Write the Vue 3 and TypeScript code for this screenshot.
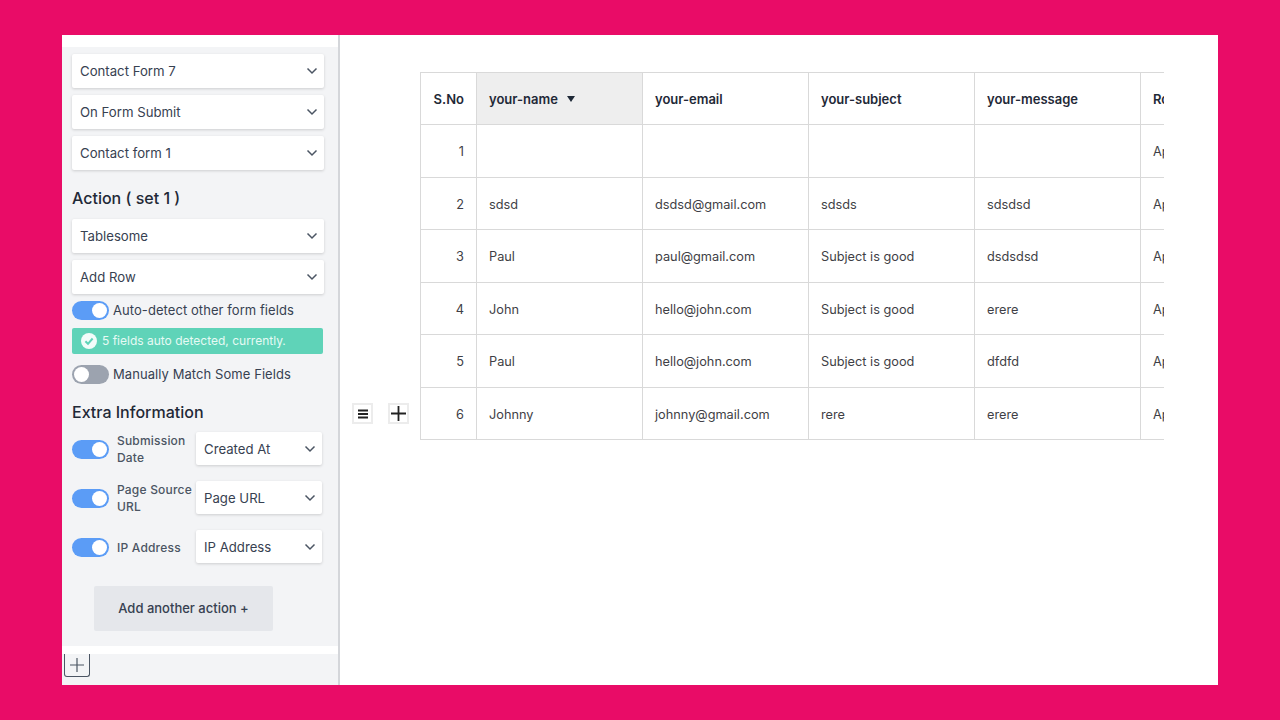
<script setup lang="ts">
const triggerSelects = ['Contact Form 7', 'On Form Submit', 'Contact form 1']
const actionSelects = ['Tablesome', 'Add Row']
const extras = [
  { label: 'Submission Date', value: 'Created At' },
  { label: 'Page Source URL', value: 'Page URL' },
  { label: 'IP Address', value: 'IP Address' },
]
const columns = ['your-email', 'your-subject', 'your-message']
const rows = [
  ['', '', '', ''],
  ['sdsd', 'dsdsd@gmail.com', 'sdsds', 'sdsdsd'],
  ['Paul', 'paul@gmail.com', 'Subject is good', 'dsdsdsd'],
  ['John', 'hello@john.com', 'Subject is good', 'erere'],
  ['Paul', 'hello@john.com', 'Subject is good', 'dfdfd'],
  ['Johnny', 'johnny@gmail.com', 'rere', 'erere'],
]
</script>

<template>
  <div class="page">
    <div class="frame">
      <aside class="sidebar">
        <div class="top-strip"></div>
        <div class="panel">
          <div class="stack">
            <div v-for="s in triggerSelects" :key="s" class="select">
              <span>{{ s }}</span>
              <svg class="chev" viewBox="0 0 12 8"><path d="M1.500 1.500 6 6l4.500-4.500" /></svg>
            </div>
          </div>

          <h3 class="heading action-heading">Action ( set 1 )</h3>
          <div class="stack">
            <div v-for="s in actionSelects" :key="s" class="select">
              <span>{{ s }}</span>
              <svg class="chev" viewBox="0 0 12 8"><path d="M1.500 1.500 6 6l4.500-4.500" /></svg>
            </div>
          </div>

          <div class="toggle-row first">
            <span class="toggle on"><i></i></span>
            <span class="toggle-text">Auto-detect other form fields</span>
          </div>
          <div class="notice">
            <svg class="check" viewBox="0 0 16 16">
              <circle cx="8" cy="8" r="8" fill="#fff" fill-opacity="0.92" />
              <path d="M4.400 8.300 7 10.800l4.600-5.300" fill="none" stroke="#5fd3b8" stroke-width="2" />
            </svg>
            <span>5 fields auto detected, currently.</span>
          </div>
          <div class="toggle-row manual">
            <span class="toggle off"><i></i></span>
            <span class="toggle-text">Manually Match Some Fields</span>
          </div>

          <h3 class="heading extra-heading">Extra Information</h3>
          <div class="extras">
            <div v-for="e in extras" :key="e.label" class="extra-row">
              <span class="toggle on"><i></i></span>
              <span class="extra-label">{{ e.label }}</span>
              <div class="select small">
                <span>{{ e.value }}</span>
                <svg class="chev" viewBox="0 0 12 8"><path d="M1.500 1.500 6 6l4.500-4.500" /></svg>
              </div>
            </div>
          </div>

          <button class="add-action">Add another action +</button>
        </div>
        <div class="white-gap"></div>
        <div class="foot">
          <div class="foot-add">
            <svg viewBox="0 0 14 14"><path d="M7 0v14M0 7h14" /></svg>
          </div>
        </div>
      </aside>

      <main class="main">
        <div class="row-tools">
          <div class="tool">
            <svg viewBox="0 0 10 10" width="10" height="10"><path d="M0 1.500h10M0 5h10M0 8.500h10" /></svg>
          </div>
          <div class="tool">
            <svg viewBox="0 0 15 15" width="15" height="15"><path d="M7.500 0v15M0 7.500h15" /></svg>
          </div>
        </div>
        <div class="table-wrap">
          <table>
            <thead>
              <tr>
                <th class="sno">S.No</th>
                <th class="sorted">your-name <span class="caret"></span></th>
                <th v-for="c in columns" :key="c">{{ c }}</th>
                <th>Row Created</th>
              </tr>
            </thead>
            <tbody>
              <tr v-for="(r, i) in rows" :key="i">
                <td class="sno">{{ i + 1 }}</td>
                <td v-for="(v, j) in r" :key="j">{{ v }}</td>
                <td>Apr 12, 2022</td>
              </tr>
            </tbody>
          </table>
        </div>
      </main>
    </div>
  </div>
</template>

<style>
html, body { margin: 0; background: #e90c67; }
</style>

<style scoped>
.page {
  width: 1280px;
  height: 720px;
  box-sizing: border-box;
  padding: 35px 62px;
  background: #e90c67;
  font-family: Inter, "Liberation Sans", sans-serif;
  overflow: hidden;
}
.frame {
  display: flex;
  height: 650px;
  background: #fff;
}
.sidebar {
  width: 278px;
  flex-shrink: 0;
  display: flex;
  flex-direction: column;
  border-right: 2px solid #d4d6da;
  box-sizing: border-box;
}
.top-strip { height: 12px; background: #fff; }
.panel {
  height: 599px;
  box-sizing: border-box;
  padding: 7px 14px 0 10px;
  background: #f3f4f6;
}
.stack {
  display: flex;
  flex-direction: column;
  gap: 7px;
}
.select {
  display: flex;
  align-items: center;
  justify-content: space-between;
  height: 34px;
  box-sizing: border-box;
  padding: 0 6px 0 8px;
  background: #fff;
  border-radius: 2px;
  box-shadow: 0 1px 3px rgba(0, 0, 0, 0.16);
  font-size: 13.2px;
  color: #374151;
}
.chev {
  width: 12px;
  height: 8px;
  fill: none;
  stroke: #4b5563;
  stroke-width: 1.5;
}
.heading {
  margin: 0;
  font-size: 16px;
  line-height: 20px;
  font-weight: 500;
  color: #1f2937;
}
.action-heading { margin: 18px 0 11px; }
.toggle-row {
  display: flex;
  align-items: center;
  gap: 4px;
  font-size: 13px;
  letter-spacing: 0.07px;
  color: #374151;
}
.toggle-text { padding-bottom: 1px; }
.toggle-row.first { margin-top: 7px; }
.manual { margin-top: 11px; }
.toggle {
  position: relative;
  display: block;
  width: 37px;
  height: 19px;
  flex-shrink: 0;
  border-radius: 10px;
}
.toggle i {
  position: absolute;
  top: 2px;
  width: 15px;
  height: 15px;
  border-radius: 50%;
  background: #fff;
}
.toggle.on { background: #5b9cf6; }
.toggle.on i { right: 2px; }
.toggle.off { background: #9ca3af; }
.toggle.off i { left: 2px; }
.notice {
  display: flex;
  align-items: center;
  gap: 5px;
  height: 26px;
  width: 251px;
  margin-top: 8px;
  padding: 0 0 1px 9px;
  box-sizing: border-box;
  background: #5fd3b8;
  border-radius: 2px;
  font-size: 12px;
  color: #e6faf4;
}
.check { width: 16px; height: 16px; flex-shrink: 0; }
.extra-heading { margin: 18px 0 10px; }
.extras {
  display: flex;
  flex-direction: column;
  gap: 16px;
}
.extra-row {
  display: flex;
  align-items: center;
  height: 33px;
}
.extra-row .toggle { margin-top: 2px; }
.extra-label {
  width: 79px;
  margin-left: 8px;
  padding-top: 1px;
  flex-shrink: 0;
  font-size: 12px;
  font-weight: 500;
  letter-spacing: 0.2px;
  line-height: 17px;
  color: #4b5563;
}
.select.small {
  width: 126px;
  height: 33px;
  box-sizing: border-box;
}
.add-action {
  display: block;
  width: 179px;
  height: 45px;
  margin: 23px 0 0 22px;
  padding: 0 0 1px;
  border: 0;
  border-radius: 2px;
  background: #e5e7eb;
  font-family: inherit;
  font-size: 13px;
  font-weight: 500;
  color: #374151;
}
.white-gap { height: 8px; background: #fff; }
.foot {
  flex: 1;
  background: #f3f4f6;
  padding-left: 2px;
}
.foot-add {
  display: flex;
  align-items: center;
  justify-content: center;
  width: 26px;
  height: 23px;
  box-sizing: border-box;
  border: 1px solid #4b5563;
  border-top: 0;
  border-radius: 0 0 3px 3px;
}
.foot-add svg {
  width: 14px;
  height: 14px;
  fill: none;
  stroke: #4b5563;
  stroke-width: 1.2;
}
.main {
  flex: 1;
  display: flex;
  align-items: flex-start;
  padding: 37px 54px 0 12px;
  min-width: 0;
}
.row-tools {
  display: flex;
  gap: 15px;
  width: 68px;
  flex-shrink: 0;
  margin-top: 331px;
}
.tool {
  display: flex;
  align-items: center;
  justify-content: center;
  width: 21px;
  height: 21px;
  box-sizing: border-box;
  border: 2px solid #ececec;
  background: #fff;
}
.tool svg {
  fill: none;
  stroke: #222;
  stroke-width: 1.8;
}
.table-wrap {
  width: 744px;
  flex-shrink: 0;
  overflow: hidden;
}
table {
  width: 886px;
  table-layout: fixed;
  border-collapse: collapse;
  font-size: 12.75px;
  color: #3f3f46;
}
th, td {
  width: 166px;
  height: 52.5px;
  box-sizing: border-box;
  padding: 2px 12px 0;
  border: 1px solid #d9d9d9;
  text-align: left;
  white-space: nowrap;
}
th {
  height: 52px;
  padding-top: 0;
  font-size: 13px;
  font-weight: 600;
  color: #1f2937;
}
th.sno { width: 56px; text-align: right; padding: 0 12px 0 0; }
td.sno { text-align: right; padding: 2px 12px 0 0; }
.sorted { background: #eeeeee; }
.caret {
  display: inline-block;
  margin-left: 6px;
  vertical-align: 2px;
  border-left: 4px solid transparent;
  border-right: 4px solid transparent;
  border-top: 6px solid #1f2937;
}
</style>
